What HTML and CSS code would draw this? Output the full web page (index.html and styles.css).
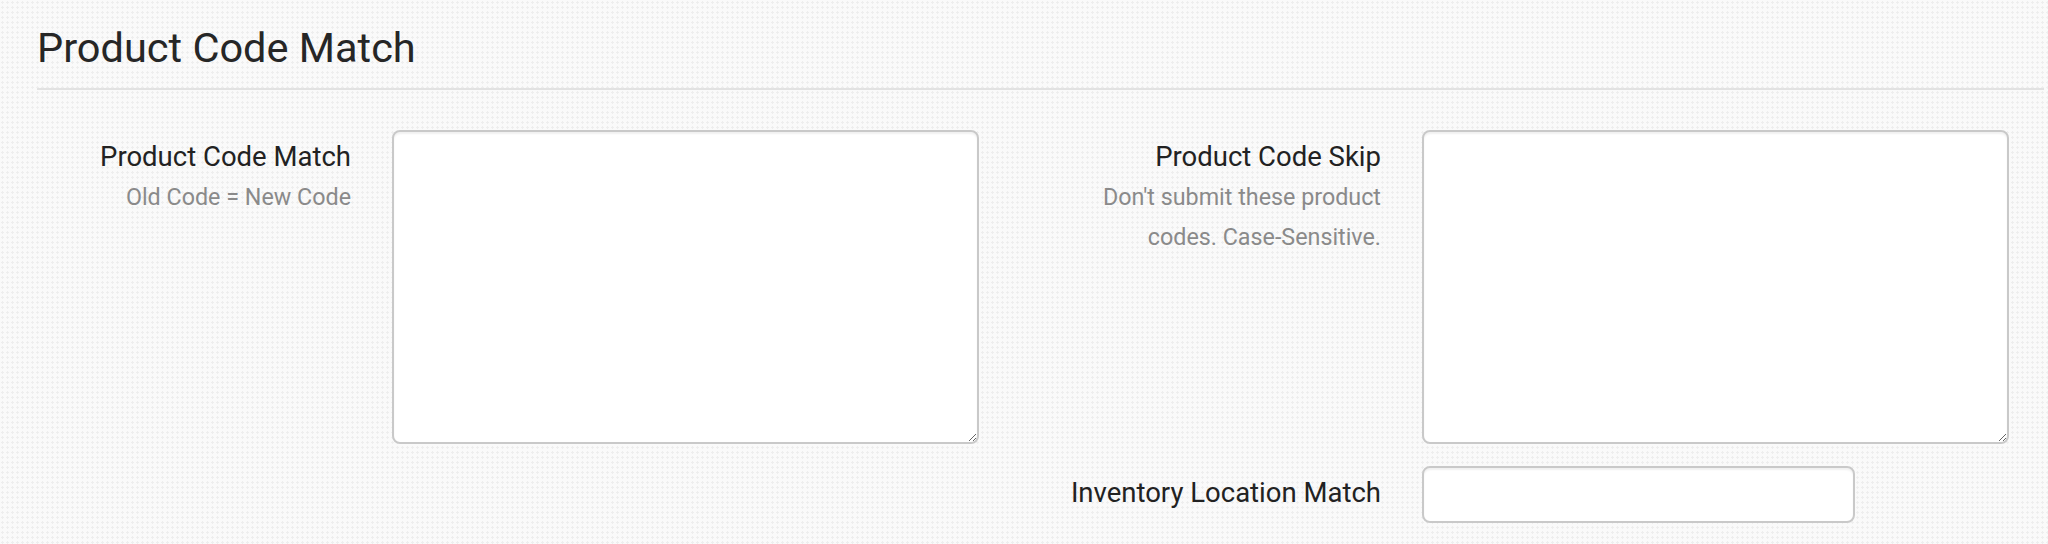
FILE: index.html
```html
<!DOCTYPE html>
<html lang="en">
<head>
    <meta charset="UTF-8">
    <meta name="viewport" content="width=device-width, initial-scale=1.0">
    <title>Product Code Match</title>
    <link rel="stylesheet" href="styles.css">
</head>
<body>
    <div class="section">
        <h2 class="section-title">Product Code Match</h2>
        <hr class="section-rule">

        <!-- Code match / skip lists -->
        <div class="form-row">
            <div class="form-group">
                <div class="label-col">
                    <label for="codeMatch">Product Code Match</label>
                    <div class="help-text">Old Code = New Code</div>
                </div>
                <textarea id="codeMatch" class="form-control area"></textarea>
            </div>

            <div class="form-group">
                <div class="label-col">
                    <label for="codeSkip">Product Code Skip</label>
                    <div class="help-text">Don't submit these product codes. Case-Sensitive.</div>
                </div>
                <textarea id="codeSkip" class="form-control area"></textarea>
            </div>
        </div>

        <!-- Inventory location -->
        <div class="form-row">
            <div class="form-group empty"></div>

            <div class="form-group">
                <div class="label-col">
                    <label for="locationMatch">Inventory Location Match</label>
                </div>
                <input type="text" id="locationMatch" class="form-control text-input">
            </div>
        </div>
    </div>
</body>
</html>
```

FILE: styles.css
```css
body {
    margin: 0;
    padding: 25px 4px 0 37px;
    font-family: Roboto, "Liberation Sans", Arial, sans-serif;
    color: #222222;
    background-color: #fafafa;
    background-image: radial-gradient(circle, #eeeeee 1px, transparent 1.2px);
    background-size: 5px 5px;
}

.section-title {
    margin: 0;
    font-size: 41.5px;
    font-weight: 400;
    line-height: 46px;
    color: #262626;
}

.section-rule {
    margin: 17px 0 40px 0;
    border: none;
    height: 2px;
    background-color: #e2e2e2;
}

.form-row {
    display: flex;
    gap: 88px;
    margin-bottom: 22px;
}

.form-group {
    display: flex;
    gap: 41px;
    width: 942px;
}

.label-col {
    width: 314px;
    flex-shrink: 0;
    padding-top: 7px;
    text-align: right;
}

.label-col label {
    display: block;
    font-size: 27.5px;
    line-height: 40px;
    white-space: nowrap;
}

.help-text {
    font-size: 23.3px;
    line-height: 40px;
    color: #8a8a8a;
}

.form-control {
    box-sizing: border-box;
    background-color: #ffffff;
    border: 2px solid #c9c9c9;
    border-radius: 8px;
    box-shadow: inset 0 2px 2px rgba(0, 0, 0, 0.06);
    font-family: inherit;
    font-size: 28px;
    margin: 0;
}

.area {
    width: 587px;
    height: 314px;
}

.text-input {
    width: 433px;
    height: 57px;
}
```
